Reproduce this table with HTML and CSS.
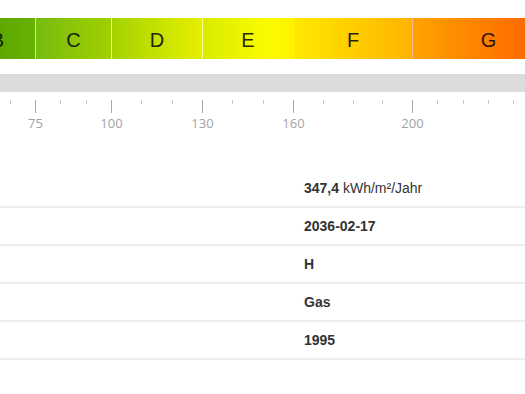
FILE: index.html
```html
<!DOCTYPE html>
<html lang="de">
<head>
<meta charset="utf-8">
<title>Energieausweis</title>
<link rel="stylesheet" href="styles.css">
</head>
<body>
<div class="page">
  <div class="chart">
    <div class="bar">
      <div class="seg seg-b"><span>B</span></div>
      <div class="seg seg-c"><span>C</span></div>
      <div class="seg seg-d"><span>D</span></div>
      <div class="seg seg-e"><span>E</span></div>
      <div class="seg seg-f"><span>F</span></div>
      <div class="seg seg-g"><span>G</span></div>
    </div>
    <div class="track"></div>
    <div class="scale">
      <div class="ticks seg-b n3">
        <div class="cell"><div class="major"><i></i></div></div>
        <div class="cell"><i class="minor"></i></div>
        <div class="cell"><i class="minor"></i></div>
      </div>
      <div class="ticks seg-c n3">
        <div class="cell"><div class="major"><i></i><span>75</span></div></div>
        <div class="cell"><i class="minor"></i></div>
        <div class="cell"><i class="minor"></i></div>
      </div>
      <div class="ticks seg-d n3">
        <div class="cell"><div class="major"><i></i><span>100</span></div></div>
        <div class="cell"><i class="minor"></i></div>
        <div class="cell"><i class="minor"></i></div>
      </div>
      <div class="ticks seg-e n3">
        <div class="cell"><div class="major"><i></i><span>130</span></div></div>
        <div class="cell"><i class="minor"></i></div>
        <div class="cell"><i class="minor"></i></div>
      </div>
      <div class="ticks seg-f n4">
        <div class="cell"><div class="major"><i></i><span>160</span></div></div>
        <div class="cell"><i class="minor"></i></div>
        <div class="cell"><i class="minor"></i></div>
        <div class="cell"><i class="minor"></i></div>
      </div>
      <div class="ticks seg-g n6">
        <div class="cell"><div class="major"><i></i><span>200</span></div></div>
        <div class="cell"><i class="minor"></i></div>
        <div class="cell"><i class="minor"></i></div>
        <div class="cell"><i class="minor"></i></div>
        <div class="cell"><i class="minor"></i></div>
        <div class="cell"><i class="minor"></i></div>
      </div>
    </div>
  </div>

  <div class="rows">
    <div class="row"><div class="label"></div><div class="value"><b>347,4</b> kWh/m²/Jahr</div></div>
    <div class="row"><div class="label"></div><div class="value"><b>2036-02-17</b></div></div>
    <div class="row"><div class="label"></div><div class="value"><b>H</b></div></div>
    <div class="row"><div class="label"></div><div class="value"><b>Gas</b></div></div>
    <div class="row"><div class="label"></div><div class="value"><b>1995</b></div></div>
  </div>
</div>
</body>
</html>
```

FILE: styles.css
```css
html, body {
  margin: 0;
  padding: 0;
  background: #ffffff;
}

body {
  font-family: "Liberation Sans", Arial, sans-serif;
  color: #333333;
  overflow: hidden;
}

.page {
  width: 525px;
  height: 394px;
  overflow: hidden;
}

.chart {
  margin-left: -40px;
  padding-top: 18px;
  width: 604px;
}

.bar {
  display: flex;
  height: 41px;
}

.seg {
  flex: none;
  display: flex;
  align-items: center;
  justify-content: center;
  box-sizing: border-box;
}

.bar .seg + .seg {
  border-left: 1px solid rgba(255, 255, 255, 0.55);
}

.seg span {
  font-family: "Liberation Sans", Arial, sans-serif;
  font-size: 20px;
  line-height: 1;
  color: rgba(10, 10, 10, 0.9);
  padding-top: 3px;
}

.seg-b { width: 75px; }
.seg-c { width: 76px; }
.seg-d { width: 91px; }
.seg-e { width: 91px; }
.seg-f { width: 119px; }
.seg-g { width: 152px; }

.bar .seg-b { background: linear-gradient(to right, #4f9c00, #68b300); }
.bar .seg-c { background: linear-gradient(to right, #76bb10, #a2d000); }
.bar .seg-d { background: linear-gradient(to right, #a4d300, #e6ef00); }
.bar .seg-e { background: linear-gradient(to right, #d8ec00, #fbfb00 70%, #fff200); }
.bar .seg-f { background: linear-gradient(to right, #ffe900, #ffb300); }
.bar .seg-g { background: linear-gradient(to right, #ffa300, #ff6a00 75%, #ff6000); }

.track {
  margin-top: 15px;
  height: 18px;
  background: #dcdcdc;
}

.scale {
  display: flex;
  margin-top: 8px;
  height: 32px;
}

.ticks {
  flex: none;
  display: grid;
}

.n3 { grid-template-columns: repeat(3, 1fr); }
.n4 { grid-template-columns: repeat(4, 1fr); }
.n6 { grid-template-columns: repeat(6, 1fr); }

.cell {
  display: flex;
  align-items: flex-start;
}

.minor {
  display: block;
  width: 1px;
  height: 4px;
  background: #c8c8c8;
}

.major {
  width: 1px;
  display: flex;
  flex-direction: column;
  align-items: center;
}

.major i {
  display: block;
  width: 1px;
  height: 13px;
  background: #a8a8a8;
}

.major span {
  margin-top: 2px;
  font-family: "Open Sans", sans-serif;
  font-size: 13px;
  line-height: 16px;
  color: #a3a3a3;
  white-space: nowrap;
}

.rows {
  margin-top: 38px;
}

.row {
  display: grid;
  grid-template-columns: 294px 1fr;
  height: 38px;
  box-sizing: border-box;
  border-bottom: 2px solid #eeeeee;
}

.value {
  display: flex;
  align-items: center;
  padding-left: 10px;
  font-size: 14px;
  color: #333333;
  white-space: pre;
}

.value b {
  font-weight: bold;
}
```
